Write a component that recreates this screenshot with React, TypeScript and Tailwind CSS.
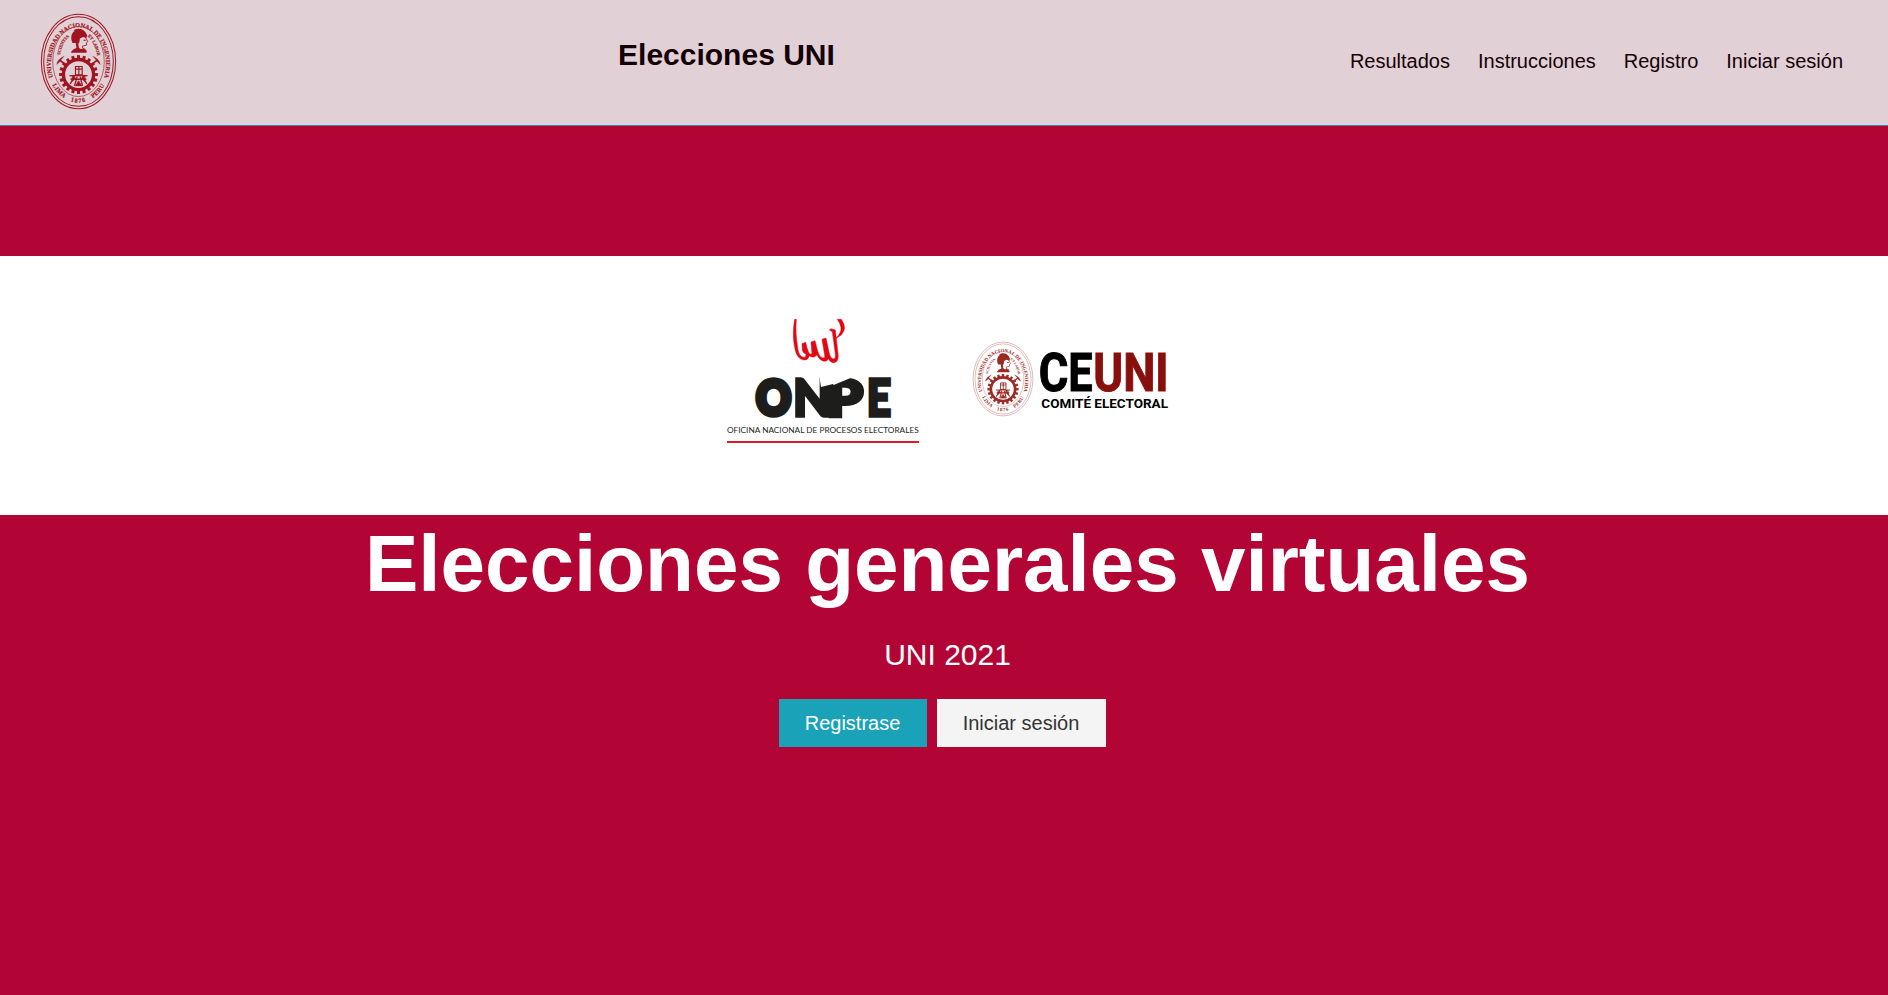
type SealProps = { id: string; color: string; className: string; light?: boolean };

const teeth = Array.from({ length: 20 }, (_, i) => i * 18);

function Seal({ id, color, className, light }: SealProps) {
  const ring = light ? 1.2 : 3;
  return (
    <svg viewBox="30 24 230 290" preserveAspectRatio="none" className={className} fill={color}>
      <defs>
        <path id={`${id}-outer`} d="M 76 236 A 82 110 0 1 1 214 236" />
        <path id={`${id}-bottom`} d="M 50 169 A 95 123 0 0 0 240 169" />
        <path id={`${id}-left`} d="M 89 156 A 60 84 0 0 1 132 86" />
        <path id={`${id}-right`} d="M 158 86 A 60 84 0 0 1 201 156" />
      </defs>
      <g fill="none" stroke={color}>
        <ellipse cx="145" cy="169" rx="111" ry="141" strokeWidth={ring} />
        <ellipse cx="145" cy="169" rx="104" ry="134" strokeWidth={ring} />
        <ellipse cx="145" cy="169" rx="77" ry="105" strokeWidth={light ? 1 : 1.8} />
      </g>
      <g fontFamily="'Liberation Serif', serif" fontWeight="700" textAnchor="middle" stroke={color} strokeWidth={light ? 0 : 0.5}>
        <text fontSize="18.5">
          <textPath href={`#${id}-outer`} startOffset="50%">UNIVERSIDAD NACIONAL DE INGENIERIA</textPath>
        </text>
        <text fontSize="18.5" letterSpacing="1">
          <textPath href={`#${id}-bottom`} startOffset="29%">LIMA</textPath>
        </text>
        <text fontSize="18.5" letterSpacing="3">
          <textPath href={`#${id}-bottom`} startOffset="50%">1876</textPath>
        </text>
        <text fontSize="18.5" letterSpacing="1">
          <textPath href={`#${id}-bottom`} startOffset="71%">PERU</textPath>
        </text>
        <text fontSize="13">
          <textPath href={`#${id}-left`} startOffset="44%">SCIENTIA</textPath>
        </text>
        <text fontSize="13">
          <textPath href={`#${id}-right`} startOffset="57%">ET LABOR</textPath>
        </text>
      </g>
      <g>
        <path d="M127 114 C119 95 125 78 141 74 C154 70 166 77 171 92 L168 99 L159 96 L149 100 L148 111 L141 119 L136 114 Z" />
        <path d="M131 75 Q144 67 157 74 L170 88 Q155 80 139 84 Z" />
        <path d="M166 97 L173 110 L169 113 L169 120 L157 123 L157 129 Q168 131 169 141" fill="none" stroke={color} strokeWidth="2.5" />
        <path d="M122 143 Q127 132 139 129 L137 117 L144 112 L146 127 Q151 135 159 130 Q168 132 169 143 Z" />
        <path d="M160 104 h7 v3 h-7 z" />
      </g>
      <g stroke={color} fill="none">
        <path d="M88 164 L110 181 M202 164 L180 181" strokeWidth="5" />
        <path d="M80 178 Q81 163 102 153 Q92 164 89 170 Z M210 178 Q209 163 188 153 Q198 164 201 170 Z" fill={color} strokeWidth="1" />
        <circle cx="145" cy="208" r="45" strokeWidth="10" />
        {teeth.map((angle) => (
          <path key={angle} d="M145 160 v-10" strokeWidth="9" transform={`rotate(${angle} 145 208)`} />
        ))}
        <path d="M136 184 h20 v25 h-20 z M146 184 v25 M138 192 h17 M118 211 h54 M125 216 l15 -6 M166 216 l-15 -6" strokeWidth="3.5" />
        <path d="M130 220 L120 236 M160 220 L170 236 M141 214 L133 242 M150 214 L157 242 M128 222 h35" strokeWidth="4" />
        <path d="M121 221 l11 -7 l5 5 l-10 10 z M169 221 l-11 -7 l-5 5 l10 10 z M135 242 l10 -16 l11 16 z" fill={color} strokeWidth="1" />
      </g>
    </svg>
  );
}

function OnpeLogo() {
  return (
    <svg viewBox="0 0 645 435" className="h-[145px] w-[215px]">
      <g fill="#e30613" stroke="#e30613" strokeWidth="1.5">
        <path d="M239 43 L244 43 C241 74 244 103 249 134 C252 150 260 159 272 156 L273 147 Q264 145 262 135 L261 116 L272 112 L276 128 Q280 143 285 148 L291 146 L288 111 L300 107 L307 135 Q312 154 321 158 Q331 161 329 150 L321 103 L333 99 L342 141 Q346 162 356 162 Q363 161 361 147 L352 80 L343 75 L348 71 L361 75 L369 145 C372 164 365 174 355 173 Q346 172 340 161 Q337 169 327 169 Q315 168 306 150 Q300 158 290 156 L283 152 Q280 164 270 165 C252 165 243 151 239 127 C233 96 235 68 239 43 Z" />
        <path d="M367 43 L379 43 Q398 70 379 90 L362 101 Q380 82 378 68 Q376 55 367 43 Z" />
      </g>
      <g fill="#1d1d1b" stroke="#1d1d1b" fontFamily="Lato, sans-serif" fontWeight="900">
        <text x="124" y="331" fontSize="143" strokeWidth="17" textLength="104" lengthAdjust="spacingAndGlyphs">O</text>
        <text x="234" y="334" fontSize="155" strokeWidth="10" textLength="116" lengthAdjust="spacingAndGlyphs">N</text>
        <text x="335" y="333" fontSize="151" strokeWidth="13" textLength="108" lengthAdjust="spacingAndGlyphs">P</text>
        <text x="455" y="334" fontSize="155" strokeWidth="10" textLength="73" lengthAdjust="spacingAndGlyphs">E</text>
      </g>
      <path d="M311 200 L318 246 L354 237 L356 240 L412 217 L412 200 Z" fill="#ffffff" />
      <text x="36" y="384" fill="#1d1d1b" fontFamily="Lato, sans-serif" fontSize="23.5" textLength="575" lengthAdjust="spacingAndGlyphs">
        OFICINA NACIONAL DE PROCESOS ELECTORALES
      </text>
      <path d="M36 411 H612" stroke="#d91d2a" strokeWidth="6" />
    </svg>
  );
}

function CeuniLogo() {
  return (
    <div className="flex h-[95px] w-[220px] items-start pt-[11px] pl-[12px]">
      <Seal id="committee" color="#9c2a25" light className="h-[76px] w-[62px] shrink-0" />
      <svg viewBox="222 33 432 228" className="h-[76px] w-[144px] shrink-0" fontFamily="Roboto, Arial, sans-serif" fontWeight="700">
        <g fontSize="160" strokeWidth="3">
          <text x="236" y="182" fill="#000000" stroke="#000000" textLength="89" lengthAdjust="spacingAndGlyphs">C</text>
          <text x="325" y="182" fill="#000000" stroke="#000000" textLength="73" lengthAdjust="spacingAndGlyphs">E</text>
          <text x="400" y="182" fill="#870f0c" stroke="#870f0c" textLength="226" lengthAdjust="spacingAndGlyphs">UNI</text>
        </g>
        <text x="244" y="234" fill="#000000" fontSize="38" textLength="380" lengthAdjust="spacingAndGlyphs">COMITÉ ELECTORAL</text>
      </svg>
    </div>
  );
}

const links = ["Resultados", "Instrucciones", "Registro", "Iniciar sesión"];

export default function App() {
  return (
    <div className="flex h-[995px] flex-col overflow-hidden bg-[#b30535] font-['Liberation_Sans',Arial,sans-serif]">
      <header className="flex h-[126px] shrink-0 items-start justify-between border-b border-[#3a86a8] bg-[#e1d0d5] pr-[45px] pl-[40px] text-[#150007]">
        <a href="#" className="mt-[13px]">
          <Seal id="university" color="#a01420" className="h-[97px] w-[77px]" />
        </a>
        <h1 className="mt-[37px] mr-[14px] text-[30px] leading-9 font-bold">Elecciones UNI</h1>
        <nav className="mt-[46px] flex gap-7 text-[20px] leading-[30px]">
          {links.map((label) => (
            <a key={label} href="#">{label}</a>
          ))}
        </nav>
      </header>
      <main className="flex flex-col items-center pt-[130px]">
        <section className="flex h-[259px] w-full items-start bg-white pt-[49px] pl-[715px]">
          <OnpeLogo />
          <div className="mt-[25px] ml-[30px]">
            <CeuniLogo />
          </div>
        </section>
        <h2 className="mt-[3px] ml-[7px] text-[80px] leading-[92px] font-bold text-white">Elecciones generales virtuales</h2>
        <p className="mt-[27px] ml-[7px] text-[30px] leading-9 text-white">UNI 2021</p>
        <div className="mt-[26px] mr-[4px] flex gap-[10px] text-[20px]">
          <button className="h-12 w-[148px] bg-[#19a2b8] text-white">Registrase</button>
          <button className="h-12 w-[169px] bg-[#f4f4f4] text-[#333333]">Iniciar sesión</button>
        </div>
      </main>
    </div>
  );
}
